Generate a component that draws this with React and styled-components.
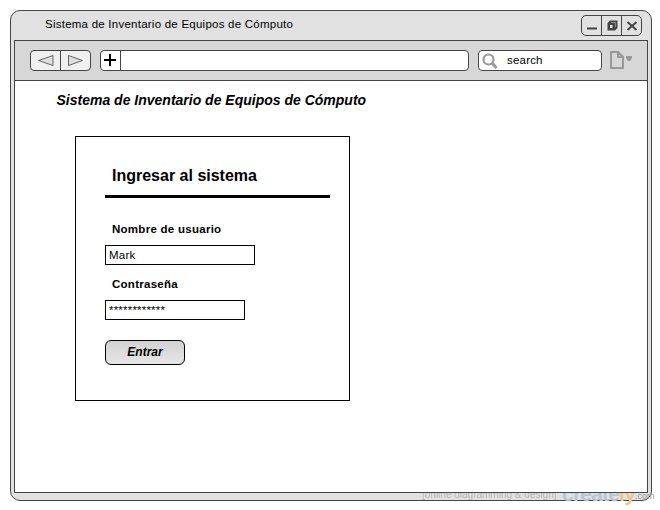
import React from "react";
import styled, { createGlobalStyle } from "styled-components";

const line = "#454545";

const GlobalStyle = createGlobalStyle`
  * { box-sizing: border-box; }
  body { margin: 0; background: #fff; color: #000; font-family: "Liberation Sans", Arial, sans-serif; }
`;

const Stage = styled.div`
  position: relative;
  width: 660px;
  height: 510px;
  padding: 10px 8px 9px 10px;
  overflow: hidden;
`;

const BrowserWindow = styled.div`
  display: flex;
  flex-direction: column;
  width: 642px;
  height: 491px;
  padding: 0 3px 7px;
  border: 1px solid ${line};
  border-radius: 10px;
  background: #e1e1e1;
`;

const TitleBar = styled.header`
  display: flex;
  justify-content: space-between;
  height: 29px;
  padding: 4px 6px 0 31px;
`;

const WindowTitle = styled.span`
  font-size: 11.5px;
  line-height: 19px;
  letter-spacing: 0.24px;
  white-space: nowrap;
`;

const Segments = styled.div`
  display: flex;
  width: 61px;
  height: 21px;
  border: 1px solid ${line};
  border-radius: ${(p) => p.$radius}px;
  background: ${(p) => p.$fill};
  overflow: hidden;
`;

const Segment = styled.button`
  display: flex;
  align-items: center;
  justify-content: center;
  flex: 0 0 ${(p) => p.$width || 20}px;
  padding: 0;
  border: 0;
  border-right: ${(p) => (p.$last ? "0" : `1px solid ${line}`)};
  background: transparent;
`;

const Viewport = styled.div`
  display: flex;
  flex-direction: column;
  flex: 1;
  border: 1px solid ${line};
  background: #fff;
`;

const Toolbar = styled.nav`
  display: flex;
  align-items: flex-start;
  height: 40px;
  padding: 9px 0 0 15px;
  border-bottom: 1px solid ${line};
  background: #d7d7d7;
`;

const Field = styled.div`
  display: flex;
  width: ${(p) => p.$width}px;
  height: 21px;
  margin-left: 9px;
  border: 1px solid ${line};
  border-radius: 4px;
  background: #fff;
  font-size: 11.5px;
  line-height: 19px;
  letter-spacing: 0.2px;
`;

const SearchText = styled.span`
  margin-left: 8px;
`;

const PageMenu = styled.div`
  display: flex;
  margin-left: 7px;
`;

const Page = styled.main`
  padding: 10px 0 0 41px;
`;

const PageTitle = styled.h1`
  margin: 0;
  padding-left: 0.5px;
  font-size: 14px;
  font-style: italic;
  line-height: 18px;
  white-space: nowrap;
`;

const LoginCard = styled.form`
  width: 275px;
  height: 265px;
  margin: 27px 0 0 19px;
  padding: 29px 19px 0 29px;
  border: 1px solid #000;
`;

const CardTitle = styled.h2`
  height: 32px;
  margin: 0 0 21px;
  padding-left: 7px;
  border-bottom: 3px solid #000;
  font-size: 16px;
  line-height: 20px;
`;

const Label = styled.label`
  display: block;
  height: 26px;
  padding-left: 7px;
  font-size: 11.5px;
  font-weight: bold;
  line-height: 20px;
  letter-spacing: 0.27px;
`;

const Input = styled.div`
  width: ${(p) => p.$width}px;
  height: 20px;
  margin-bottom: ${(p) => p.$gap}px;
  padding-left: 3px;
  border: 1px solid #000;
  font-size: 11.5px;
  line-height: 18px;
  letter-spacing: 0.2px;
`;

const Submit = styled.button`
  display: block;
  width: 80px;
  height: 25px;
  padding: 0 0 2px;
  border: 1px solid #000;
  border-radius: 6px;
  background: linear-gradient(#d2d2d2, #e6e6e6);
  color: #000;
  font: italic bold 12px "Liberation Sans", Arial, sans-serif;
`;

const Watermark = styled.div`
  position: absolute;
  top: 493px;
  left: 422px;
  display: flex;
  width: 236px;
  height: 17px;
  overflow: hidden;
  white-space: nowrap;
`;

const Tagline = styled.span`
  width: 140px;
  margin-top: -4px;
  color: #b8b8b8;
  font-size: 10px;
  line-height: 12px;
`;

const Brand = styled.span`
  width: 73px;
  margin-top: -12px;
  color: #b9c6d4;
  font-size: 21px;
  font-weight: bold;
  line-height: 26px;
  letter-spacing: -0.8px;
`;

const BrandAccent = styled.span`
  color: #f2c48c;
`;

const Domain = styled.span`
  margin-top: -3px;
  color: #999;
  font-size: 9px;
  line-height: 12px;
`;

const Minimize = () => (
  <svg width="18" height="18"><path d="M4 11.5h10" stroke={line} strokeWidth="2" /></svg>
);
const Restore = () => (
  <svg width="18" height="18" fill={line}>
    <path d="M7 3.500h7.500v7.500l-2.500 2.500H4.500V6z" />
    <path d="M7 8h2.500v3H7z" fill="#e1e1e1" />
    <path d="M8 5.500h4.500v4.500" fill="none" stroke="#aaa" strokeWidth="0.700" />
  </svg>
);
const Close = () => (
  <svg width="18" height="18"><path d="M4.500 5l9 8M13.500 5l-9 8" stroke={line} strokeWidth="2" /></svg>
);
const Back = () => (
  <svg width="29" height="19"><path d="M7.500 9.500l14.500-5v10z" fill="#ddd" stroke="#666" /></svg>
);
const Forward = () => (
  <svg width="29" height="19"><path d="M21.500 9.500l-14-5v10z" fill="#ddd" stroke="#666" /></svg>
);
const Plus = () => (
  <svg width="19" height="19"><path d="M3 9h12M9 3v12" stroke="#000" strokeWidth="2" /></svg>
);
const Magnifier = () => (
  <svg width="20" height="19" fill="none" stroke="#999">
    <circle cx="9.500" cy="8.500" r="5" strokeWidth="2.200" />
    <path d="M13 12l4.500 5" strokeWidth="3" />
  </svg>
);
const Document = () => (
  <svg width="25" height="21" fill="none" stroke="#999" strokeWidth="2">
    <path d="M2 2h7l5 5v11H2z" />
    <path d="M9 2v5h5" />
    <path d="M17 6h6v2l-2 3h-2l-2-3z" fill="#999" stroke="none" />
  </svg>
);

export default function App() {
  return (
    <>
      <GlobalStyle />
      <Stage>
        <BrowserWindow>
          <TitleBar>
            <WindowTitle>Sistema de Inventario de Equipos de Cómputo</WindowTitle>
            <Segments $radius={5} $fill="#e1e1e1">
              <Segment aria-label="Minimizar"><Minimize /></Segment>
              <Segment aria-label="Restaurar"><Restore /></Segment>
              <Segment aria-label="Cerrar" $width={19} $last><Close /></Segment>
            </Segments>
          </TitleBar>
          <Viewport>
            <Toolbar>
              <Segments $radius={4} $fill="#f0f0f0">
                <Segment aria-label="Atrás" $width={30}><Back /></Segment>
                <Segment aria-label="Adelante" $width={29} $last><Forward /></Segment>
              </Segments>
              <Field $width={369}>
                <Segment aria-label="Nueva pestaña"><Plus /></Segment>
              </Field>
              <Field $width={124}>
                <Magnifier />
                <SearchText>search</SearchText>
              </Field>
              <PageMenu><Document /></PageMenu>
            </Toolbar>
            <Page>
              <PageTitle>Sistema de Inventario de Equipos de Cómputo</PageTitle>
              <LoginCard>
                <CardTitle>Ingresar al sistema</CardTitle>
                <Label>Nombre de usuario</Label>
                <Input $width={150} $gap={9}>Mark</Input>
                <Label>Contraseña</Label>
                <Input $width={140} $gap={20}>************</Input>
                <Submit type="button">Entrar</Submit>
              </LoginCard>
            </Page>
          </Viewport>
        </BrowserWindow>
        <Watermark>
          <Tagline>[online diagramming &amp; design]</Tagline>
          <Brand>create<BrandAccent>ly</BrandAccent></Brand>
          <Domain>.com</Domain>
        </Watermark>
      </Stage>
    </>
  );
}
